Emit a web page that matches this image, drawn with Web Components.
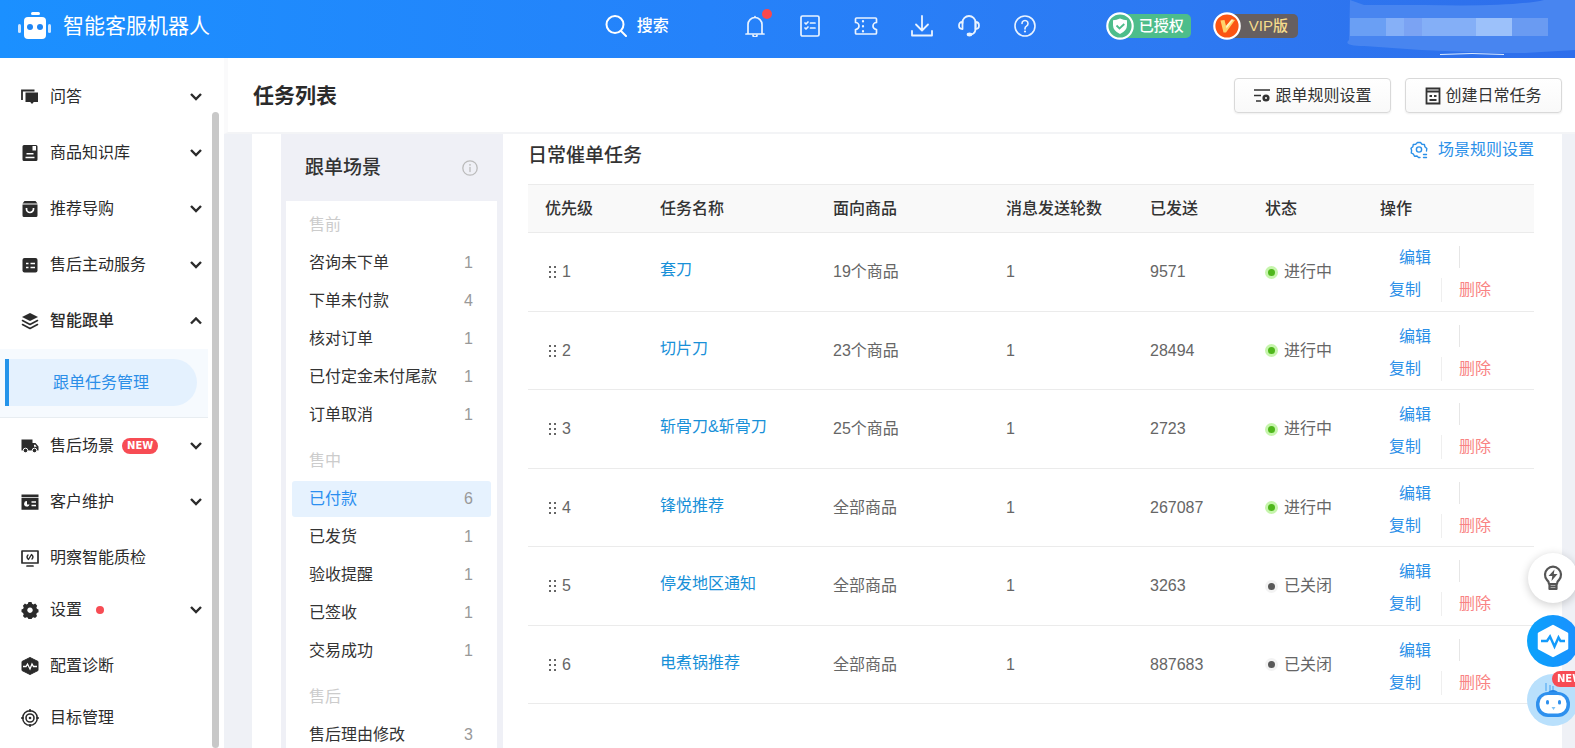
<!DOCTYPE html>
<html lang="zh-CN">
<head>
<meta charset="utf-8">
<title>智能客服机器人</title>
<style>
html,body{height:100%}
body{margin:0;overflow:hidden;font:16px/24px "Liberation Sans","Noto Sans CJK SC",sans-serif;color:#333;background:#eff1f6}
</style>
</head>
<body>
<app-shell>
  <top-bar slot="top"></top-bar>
  <side-nav slot="side">
    <nav-item icon="chat" chevron="down">问答</nav-item>
    <nav-item icon="book" chevron="down">商品知识库</nav-item>
    <nav-item icon="bag" chevron="down">推荐导购</nav-item>
    <nav-item icon="list" chevron="down">售后主动服务</nav-item>
    <nav-item icon="layers" chevron="up" open>智能跟单</nav-item>
    <sub-nav>跟单任务管理</sub-nav>
    <nav-item icon="truck" chevron="down">售后场景<new-tag slot="badge"></new-tag></nav-item>
    <nav-item icon="card" chevron="down">客户维护</nav-item>
    <nav-item icon="monitor">明察智能质检</nav-item>
    <nav-item icon="gear" chevron="down">设置<red-dot slot="badge"></red-dot></nav-item>
    <nav-item icon="pulse">配置诊断</nav-item>
    <nav-item icon="target">目标管理</nav-item>
  </side-nav>
  <page-head slot="head" heading="任务列表">
    <tool-button icon="rules">跟单规则设置</tool-button>
    <tool-button icon="form">创建日常任务</tool-button>
  </page-head>
  <scene-panel>
    <scene-group heading="售前">
      <scene-item count="1">咨询未下单</scene-item>
      <scene-item count="4">下单未付款</scene-item>
      <scene-item count="1">核对订单</scene-item>
      <scene-item count="1">已付定金未付尾款</scene-item>
      <scene-item count="1">订单取消</scene-item>
    </scene-group>
    <scene-group heading="售中">
      <scene-item count="6" active>已付款</scene-item>
      <scene-item count="1">已发货</scene-item>
      <scene-item count="1">验收提醒</scene-item>
      <scene-item count="1">已签收</scene-item>
      <scene-item count="1">交易成功</scene-item>
    </scene-group>
    <scene-group heading="售后">
      <scene-item count="3">售后理由修改</scene-item>
    </scene-group>
  </scene-panel>
  <task-table></task-table>
  <float-dock slot="dock"></float-dock>
</app-shell>

<script>
const define = (name, render) => customElements.define(name, class extends HTMLElement {
  constructor() { super(); this.attachShadow({ mode: 'open' }); }
  connectedCallback() { this.shadowRoot.innerHTML = render(this); }
});

const S = 'fill="none" stroke="currentColor" stroke-linecap="round" stroke-linejoin="round"';
const icons = {
  logo: [34, 28, '<rect x="13" y="0" width="9" height="3" rx="1.5" fill="#fff"/><rect x="6" y="5" width="22" height="22" rx="4" fill="#fff"/><rect x="0" y="12" width="3" height="9" rx="1.5" fill="#cfe6ff"/><rect x="30" y="12" width="3" height="9" rx="1.5" fill="#cfe6ff"/><circle cx="12" cy="15" r="3" fill="#1e85f5"/><circle cx="22" cy="15" r="3" fill="#1e85f5"/>'],
  search: [22, 22, `<g ${S} stroke-width="2"><circle cx="10" cy="9.500" r="8.500"/><path d="M16 16l5 5"/></g>`],
  bell: [22, 22, `<g ${S} stroke-width="1.700"><path d="M2 19h18M4 19V9.500a7 7 0 0 1 14 0V19M11 2.500V1.500"/><path d="M9 20a2 2 0 0 0 4 0"/></g>`],
  doc: [22, 22, `<g ${S} stroke-width="1.700"><rect x="2" y="1" width="18" height="20" rx="1.500"/><path d="M11.500 8h4.500M11.500 13h4.500M6 8l1 1 2-2M6 13l1 1 2-2"/></g>`],
  ticket: [24, 22, `<g ${S} stroke-width="1.700"><path d="M2.500 3h19q1 0 1 1v3.500a2.500 2.500 0 0 0 0 7V18q0 1-1 1h-19q-1 0-1-1v-3.500a2.500 2.500 0 0 0 0-7V4q0-1 1-1z"/><path d="M9 6v11" stroke-dasharray=".5 4.500" stroke-width="2.200"/></g>`],
  download: [22, 22, `<g ${S} stroke-width="1.800"><path d="M11 1v14M5 9.500l6 6 6-6M1 16v4.500h20V16"/></g>`],
  headset: [22, 22, `<g ${S} stroke-width="1.800"><path d="M4.500 8V7.500a6.500 6.500 0 0 1 13 0V14q0 4-4 5.500"/><path d="M4.500 7q-3.500 0-3.500 3.500T4.500 14zM17.500 7q3.500 0 3.500 3.500T17.500 14z"/></g><ellipse cx="11.500" cy="19.500" rx="2.800" ry="1.900" fill="currentColor"/>`],
  help: [22, 22, `<g ${S} stroke-width="1.600"><circle cx="11" cy="11" r="10"/><path d="M8 8.500a3 3 0 1 1 4.500 2.600q-1.500.9-1.500 2.400v.5"/></g><circle cx="11" cy="16.500" r="1.100" fill="currentColor"/>`],
  shield: [28, 28, '<circle cx="14" cy="14" r="12.700" fill="#4dbd8b" stroke="#fff" stroke-width="2.200"/><path d="M14 6.500q3.500 1.500 7 1.800v5q0 5.500-7 8.700-7-3.200-7-8.700v-5q3.500-.3 7-1.800z" fill="#fff"/><path d="M10.500 13.500l3 3 4.800-4.500" fill="none" stroke="#4dbd8b" stroke-width="1.800"/>'],
  vip: [28, 28, '<circle cx="14" cy="14" r="12.700" fill="#fb5514" stroke="#fff" stroke-width="2.200"/><path d="M7.500 8.500l4-.5 1.500 6L18.500 7.500l3.500.5-9 12.500h-2.500z" fill="#ffd36b"/><path d="M13 14L18.500 7.500l2 .3-7 8.700z" fill="#fff3c4"/>'],
  chat: [18, 18, '<path d="M1 12V2.500h12.500" fill="none" stroke="currentColor" stroke-width="1.800"/><path d="M4.500 4.500H17v9.500h-4.200L11 16l-1.800-2H4.500z" fill="currentColor"/>'],
  book: [18, 18, '<path fill="currentColor" fill-rule="evenodd" d="M3 1h12q1.500 0 1.500 1.500V15.500q0 1.500-1.500 1.500H3q-1.500 0-1.500-1.500V2.500Q1.500 1 3 1zM11.500 2v4.500h3.500V2zM5.500 9v1.500h7V9zM4.500 12.800v1.400h9v-1.400z"/>'],
  bag: [18, 18, '<path fill="currentColor" d="M3.500 1h11l2 2.500H1.500zM1.500 4.500h15v11q0 1.500-1.500 1.500H3q-1.500 0-1.500-1.500z"/><path d="M5.500 8v1a3.500 3.500 0 0 0 7 0V8" fill="none" stroke="#fff" stroke-width="1.700"/>'],
  list: [18, 18, '<rect x="1.500" y="2" width="15" height="14.500" rx="2" fill="currentColor"/><path d="M5 7.500h2.500M9.500 7.500H14M5 11.500h2.500M9.500 11.500H14" stroke="#fff" stroke-width="1.500"/>'],
  layers: [18, 18, `<path d="M9 1l8 4-8 4-8-4z" fill="currentColor"/><path d="M1.500 8.500L9 12.500l7.500-4M1.500 12.500L9 16.500l7.500-4" ${S} stroke-width="1.600"/>`],
  truck: [18, 18, '<path d="M.5 2.500h11v11H.5zM11 6h3.500l3 3.500v4H11z" fill="currentColor"/><path d="M13 7.800h1.300l1.400 2H13z" fill="#fff"/><g fill="currentColor" stroke="#fff"><circle cx="4.500" cy="13.500" r="2.300"/><circle cx="13.500" cy="13.500" r="2.300"/></g>'],
  card: [18, 18, '<path d="M.5 1.500h17V4H.5zM.5 4.800h17v12H.5z" fill="currentColor"/><path d="M10.500 9H15M10.500 12.500H15" stroke="#fff" stroke-width="1.500"/><path d="M6 8a2.800 2.800 0 1 0 2.600 3.500H6z" fill="#fff"/>'],
  monitor: [18, 18, `<g ${S} stroke-width="1.700"><rect x="1" y="2" width="16" height="12"/><path d="M6 17h6"/><path d="M7 6q-2 2 0 4M11 6q2 2 0 4M10.500 5.500L7.500 10.500" stroke-width="1.300"/></g>`],
  gear: [18, 18, '<path fill="currentColor" fill-rule="evenodd" d="M7.500 1h3l.6 1.800 1.400.6 1.700-.8 2 2.100-.8 1.700.5 1.300 1.600.8v2.800l-1.700.8-.5 1.300.8 1.700-2 2-1.700-.8-1.300.6-.6 1.600h-3l-.6-1.700-1.300-.5-1.700.8-2-2 .8-1.700-.6-1.300L.5 11V8.500l1.700-.8.5-1.300-.8-1.700 2-2.100 1.700.8 1.300-.6zM9 6.500a2.700 2.700 0 1 0 .001 0z"/>'],
  pulse: [18, 18, '<path d="M9 .5L17 4.500v9L9 17.500 1 13.500v-9z" fill="currentColor" stroke="currentColor" stroke-linejoin="round"/><path d="M2 9.500h3L6.500 7 9 12l2-5 1.500 2.500H16" fill="none" stroke="#fff" stroke-width="1.300"/>'],
  target: [18, 18, '<g fill="none" stroke="currentColor"><circle cx="9" cy="9" r="7.300" stroke-width="1.500"/><circle cx="9" cy="9" r="4" stroke-width="1.600"/><path d="M9 0v3M9 15v3M0 9h3M15 9h3" stroke-width="1.500"/></g><circle cx="9" cy="9" r="1.300" fill="currentColor"/>'],
  down: [12, 8, '<path d="M1 1l5 5 5-5" fill="none" stroke="currentColor" stroke-width="2.400"/>'],
  up: [12, 8, '<path d="M1 6.500l5-5 5 5" fill="none" stroke="currentColor" stroke-width="2.400"/>'],
  rules: [18, 16, '<path d="M1 2h16M1 7.500h7M3 13h5" stroke="currentColor" stroke-width="1.700"/><circle cx="13" cy="10" r="2.300" fill="none" stroke="currentColor" stroke-width="2.600"/>'],
  form: [16, 18, '<g fill="none" stroke="currentColor" stroke-width="1.800"><path d="M1.500 1.500h13v15h-13zM1.500 4.500h13M4.500 13h7"/></g><path d="M4.500 8h2.500v2H4.500zM9 8h2.500v2H9z" fill="currentColor"/>'],
  scene: [18, 18, `<g ${S} stroke-width="1.400"><path d="M10 16.500H8.500L7 15l-2.500.2-1-2L1.300 12l.3-2.500L1 7.300l1.800-1.500.5-2.300 2.400-.2L7.500 1.500h3l1.500 1.800 2.400.2.500 2.300L16.800 7.500 16.500 10"/><circle cx="9" cy="8.500" r="2.600"/><path d="M13.500 13.500h3M13.500 16.500h3"/></g>`],
  info: [16, 16, `<g ${S} stroke-width="1.300"><circle cx="8" cy="8" r="7.200"/><path d="M8 7.500v4"/></g><circle cx="8" cy="4.800" r=".9" fill="currentColor"/>`],
  grip: [8, 12, '<g fill="currentColor"><rect width="2" height="2"/><rect x="5" width="2" height="2"/><rect y="5" width="2" height="2"/><rect x="5" y="5" width="2" height="2"/><rect y="10" width="2" height="2"/><rect x="5" y="10" width="2" height="2"/></g>'],
  bulb: [20, 26, `<g ${S} stroke-width="2.200"><path d="M6 19q0-2.500-2-4a8 8 0 1 1 12 0Q14 16.500 14 19zM6.500 19v5h7v-5M6.500 21.500h7"/></g><path d="M11.500 4.500L5.500 11h3.800l-.8 5 6-7H10.800z" fill="currentColor"/>`],
  health: [32, 34, '<path d="M16 2L30 9.500v15L16 32 2 24.500v-15z" fill="#fff" stroke="#fff" stroke-width="2.500" stroke-linejoin="round"/><path d="M4 17h6l3-4.500 4.500 10 4-9 2 3.500H28" fill="none" stroke="#149bfb" stroke-width="2.400"/>'],
  bot: [38, 38, '<path d="M12 2v8M16 4v7M19 5v6" stroke="#6bb7f5" stroke-width="1.500"/><path d="M12 13q7-8 14 0z" fill="#2385e6"/><rect x="2" y="11" width="34" height="25" rx="12" fill="#2e90ee"/><rect x="5.500" y="14" width="27" height="18.500" rx="8.500" fill="#fff"/><rect x="12" y="19" width="3" height="4.500" rx="1.500" fill="#2e90ee"/><rect x="24" y="19" width="3" height="4.500" rx="1.500" fill="#2e90ee"/><path d="M17.500 26h4l-2 3z" fill="#7dc2f7"/>'],
  smudge: [229, 58, '<path d="M4 0l14 5h60q90 2 120-5h31v50l-50 3H145L75 50 18 46Q-4 46 3 40z" fill="#4885f0"/><g><rect x="4" y="18" width="36" height="18" fill="#6a9ff4"/><rect x="40" y="18" width="18" height="18" fill="#86b0f7"/><rect x="58" y="18" width="18" height="18" fill="#7ba3f3"/><rect x="76" y="18" width="54" height="18" fill="#84aff7"/><rect x="130" y="18" width="36" height="18" fill="#9cc1fa"/><rect x="166" y="18" width="36" height="18" fill="#6a9bf2"/></g><path d="M94 54.500q32-2 64 0" fill="none" stroke="#d9e9ff" stroke-width="1"/>']
};

define('app-icon', el => {
  const [w, h, body] = icons[el.getAttribute('name')];
  return `<style>:host{display:block;flex:none}svg{display:block}</style><svg width="${w}" height="${h}" viewBox="0 0 ${w} ${h}" aria-hidden="true">${body}</svg>`;
});

define('app-shell', () => `<style>
  :host{display:grid;grid-template:58px minmax(0,1fr)/224px minmax(0,1fr);height:100vh;overflow:hidden}
  .top{grid-column:1/3}
  .side{background:#fff;overflow:hidden}
  .main{display:flex;flex-direction:column;min-width:0;overflow:hidden}
  .body{flex:1;min-height:0;overflow:hidden;padding:0 13px 0 28px}
  .card{display:flex;gap:25px;background:#fff;min-height:100%;padding:0 28px 0 29px}
</style>
<div class="top"><slot name="top"></slot></div>
<div class="side"><slot name="side"></slot></div>
<main class="main"><slot name="head"></slot><div class="body"><div class="card"><slot></slot></div></div></main>
<slot name="dock"></slot>`);

define('top-bar', () => `<style>
  :host{display:flex;align-items:center;height:58px;box-sizing:border-box;padding:0 0 6px 18px;color:#fff;background:linear-gradient(90deg,#1b90ff,#2582fa 45%,#2d79f2 75%,#2e6eeb)}
  h1{margin:0 auto 0 11px;font-size:21px;line-height:28px;font-weight:400}
  button{all:unset;cursor:pointer;display:flex;align-items:center;gap:10px;position:relative}
  .search{font-weight:500}
  .tools{display:flex;align-items:center;gap:33px;margin:0 70px 0 75px;color:#e9f3ff}
  .pair{display:flex;gap:34px;margin-left:-8px}
  .dot{position:absolute;right:-6px;top:-6px;width:10px;height:10px;border-radius:5px;background:#f9484d}
  .tag{display:flex;align-items:center;margin-right:22px;font-size:15px;line-height:24px;font-weight:500}
  .tag app-icon{z-index:1}
  .tag span{background:#4dbd8b;border-radius:0 5px 5px 0;margin-left:-14px;padding:0 7px 0 19px}
  .tag.vip span{background:#665f60;color:#f5dc8c;padding:0 10px 0 22px}
  .user{height:52px;margin-left:26px}
</style>
<app-icon name="logo"></app-icon><h1>智能客服机器人</h1>
<button class="search"><app-icon name="search"></app-icon>搜索</button>
<div class="tools">
  <button aria-label="通知"><app-icon name="bell"></app-icon><span class="dot"></span></button>
  <button aria-label="任务"><app-icon name="doc"></app-icon></button>
  <button aria-label="卡券"><app-icon name="ticket"></app-icon></button>
  <button aria-label="下载"><app-icon name="download"></app-icon></button>
  <div class="pair"><button aria-label="客服"><app-icon name="headset"></app-icon></button>
  <button aria-label="帮助"><app-icon name="help"></app-icon></button></div>
</div>
<div class="tag"><app-icon name="shield"></app-icon><span>已授权</span></div>
<div class="tag vip"><app-icon name="vip"></app-icon><span>VIP版</span></div>
<app-icon class="user" name="smudge"></app-icon>`);

define('side-nav', () => `<style>
  :host{display:block;position:relative;padding-top:11px;width:224px;height:100%;box-sizing:border-box}
  .bar{position:absolute;right:5px;top:54px;bottom:0;width:7px;border-radius:4px;background:#c8c8c8}
</style><nav><slot></slot></nav><div class="bar"></div>`);

define('nav-item', el => {
  const chev = el.getAttribute('chevron');
  return `<style>
  :host{display:block}
  a{display:flex;align-items:center;height:${chev ? 56 : 52}px;box-sizing:border-box;padding:${chev ? 0 : 4}px 22px 0 21px;color:#2b2b2b;text-decoration:none;font-weight:${el.hasAttribute('open') ? 500 : 400}}
  .label{margin-left:11px}
  .chev{margin-left:auto}
</style><a href="#"><app-icon name="${el.getAttribute('icon')}"></app-icon><span class="label"><slot></slot></span><slot name="badge"></slot>${chev ? `<app-icon class="chev" name="${chev}"></app-icon>` : ''}</a>`;
});

define('sub-nav', () => `<style>
  :host{display:block;width:208px;box-sizing:border-box;padding:10px 11px 11px 5px;height:69px;background:#f6fafe;border-bottom:1px solid #e8edf1}
  a{display:block;box-sizing:border-box;height:47px;line-height:47px;padding-left:44px;border-left:4px solid #2494ea;border-radius:0 24px 24px 0;background:#e4f1fe;color:#2b8ee8;text-decoration:none}
</style><a href="#"><slot></slot></a>`);

define('new-tag', () => `<style>
  :host{display:block;margin-left:8px;padding:0 5px;border-radius:8px;background:#f74c54;color:#fff;font:bold 10px/16px "DejaVu Sans","Liberation Sans",sans-serif}
</style>NEW`);

define('red-dot', () => `<style>:host{display:block;width:8px;height:8px;margin-left:14px;border-radius:4px;background:#f74c54}</style>`);

define('page-head', el => `<style>
  :host{display:flex;align-items:center;gap:14px;height:76px;box-sizing:border-box;padding:1px 13px 0 25px;background:#fff;border-bottom:2px solid #f3f4f6;border-left:4px solid #fafafb}
  h2{margin:0 auto 0 0;font-size:21px;line-height:28px;font-weight:700;color:#2b2b2b}
</style><h2>${el.getAttribute('heading')}</h2><slot></slot>`);

define('tool-button', el => `<style>
  :host{display:block}
  button{display:flex;align-items:center;justify-content:center;gap:4px;width:157px;height:35px;padding:0;border:1px solid #d9d9d9;border-radius:4px;background:linear-gradient(#fff,#f9f9f9);box-shadow:0 1px 2px #0001;font:inherit;color:#333;cursor:pointer}
</style><button><app-icon name="${el.getAttribute('icon')}"></app-icon><slot></slot></button>`);

define('scene-panel', () => `<style>
  :host{display:block;flex:none;width:222px;box-sizing:border-box;padding:0 6px 0 5px;background:#eff0f6}
  header{display:flex;align-items:center;justify-content:space-between;height:67px;padding:0 19px;color:#bbb}
  h3{margin:0;font-size:19px;line-height:26px;font-weight:500;color:#333}
  div{background:#fff;padding:6px 6px 40px}
</style><header><h3>跟单场景</h3><app-icon name="info"></app-icon></header><div><slot></slot></div>`);

define('scene-group', el => `<style>
  :host{display:grid;gap:2px;margin-bottom:10px}
  h4{margin:0;padding-left:17px;line-height:36px;font-size:16px;font-weight:400;color:#ccc}
</style><h4>${el.getAttribute('heading')}</h4><slot></slot>`);

define('scene-item', el => {
  const on = el.hasAttribute('active');
  return `<style>
  :host{display:block}
  a{display:flex;justify-content:space-between;padding:0 18px 0 17px;line-height:36px;border-radius:3px;text-decoration:none;color:${on ? '#2b8ff0' : '#333'};background:${on ? '#e6f2fe' : 'none'}}
  b{font-weight:400;color:#999}
</style><a href="#"><span><slot></slot></span><b>${el.getAttribute('count')}</b></a>`;
});

const tasks = [
  ['套刀', '19个商品', 9571, true],
  ['切片刀', '23个商品', 28494, true],
  ['斩骨刀&amp;斩骨刀', '25个商品', 2723, true],
  ['锋悦推荐', '全部商品', 267087, true],
  ['停发地区通知', '全部商品', 3263, false],
  ['电煮锅推荐', '全部商品', 887683, false]
];

define('task-table', () => `<style>
  :host{display:block;flex:1;min-width:0}
  header{display:flex;justify-content:space-between;height:50px}
  h3{margin:9px 0 0;font-size:19px;line-height:26px;font-weight:500;color:#333}
  a{text-decoration:none;color:#2b90e8}
  .rule{display:flex;align-items:center;gap:10px;height:24px;margin-top:4px}
  table{width:100%;height:520px;table-layout:fixed;border-collapse:separate;border-spacing:0;color:#666}
  th{height:49px;box-sizing:border-box;padding:1px 0 0 17px;text-align:left;font-weight:500;color:#333;background:#f9f9f9;border:solid #ebebeb;border-width:1px 0}
  td{padding:1px 0 0 17px;border-bottom:1px solid #ebebeb}
  .no,.state{display:flex;align-items:center}
  .no{gap:5px;padding-left:4px}
  td>a{display:block;padding-bottom:4px;color:#1890d8}
  .state{gap:6px}
  .state::before{content:"";width:7px;height:7px;border-radius:7px;border:3px solid #c6f5ac;background:#4fb71c}
  .state.off::before{border-color:#f3f3f3;background:#595959}
  .ops{display:grid;grid-template-columns:70px auto;row-gap:8px;padding:4px 0 0 9px}
  .ops .edit{padding-left:10px}
  .ops .copy{border-right:1px solid #efefef;margin-right:17px}
  .ops i{border-left:1px solid #e6e6e6;margin-bottom:2px}
  .ops .del{color:#f98383}
</style>
<header><h3>日常催单任务</h3><a class="rule" href="#"><app-icon name="scene"></app-icon>场景规则设置</a></header>
<table>
<colgroup><col style="width:115px"><col style="width:173px"><col style="width:173px"><col style="width:144px"><col style="width:115px"><col style="width:115px"><col style="width:171px"></colgroup>
<thead><tr><th>优先级</th><th>任务名称</th><th>面向商品</th><th>消息发送轮数</th><th>已发送</th><th>状态</th><th>操作</th></tr></thead>
<tbody>${tasks.map(([name, goods, sent, on], i) => `<tr><td><span class="no"><app-icon name="grip"></app-icon>${i + 1}</span></td><td><a href="#">${name}</a></td><td>${goods}</td><td>1</td><td>${sent}</td><td><span class="state${on ? '' : ' off'}">${on ? '进行中' : '已关闭'}</span></td><td><div class="ops"><a class="edit" href="#">编辑</a><i></i><a class="copy" href="#">复制</a><a class="del" href="#">删除</a></div></td></tr>`).join('')}</tbody>
</table>`);

define('float-dock', () => `<style>
  :host{position:fixed;right:-4px;bottom:22px;display:grid;gap:10px;justify-items:center}
  button{display:grid;place-items:center;width:52px;height:52px;padding:0;border:0;border-radius:26px;position:relative;cursor:pointer}
  .tip{width:50px;height:50px;background:#fff;color:#555;box-shadow:0 2px 10px #0003;margin-bottom:2px}
  .check{background:linear-gradient(90deg,#0aa2fb,#1a90ff)}
  .bot{background:#b9e0fc;margin-top:-3px}
  new-tag{position:absolute;left:25px;top:-3px;margin:0}
</style>
<button class="tip" aria-label="提示"><app-icon name="bulb"></app-icon></button>
<button class="check" aria-label="诊断"><app-icon name="health"></app-icon></button>
<button class="bot" aria-label="助手"><app-icon name="bot"></app-icon><new-tag></new-tag></button>`);
</script>
</body>
</html>
